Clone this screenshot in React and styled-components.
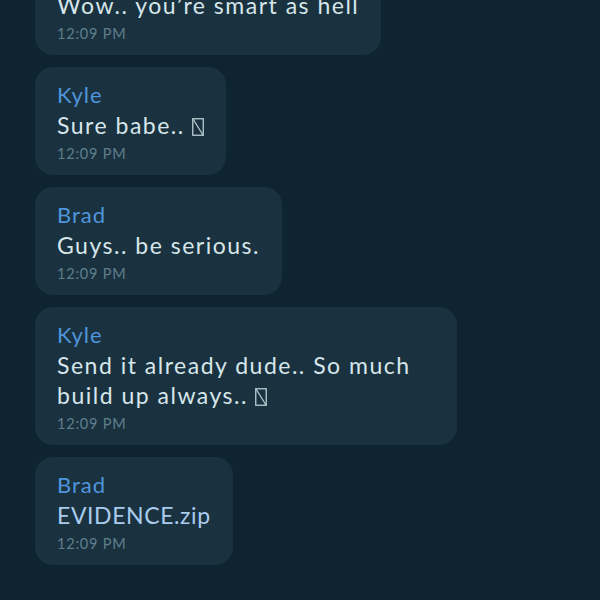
import styled, { createGlobalStyle } from 'styled-components';

const GlobalStyle = createGlobalStyle`
  html, body {
    margin: 0;
    padding: 0;
    background: #0e2531;
    overflow: hidden;
  }
`;

const Screen = styled.div`
  width: 600px;
  height: 600px;
  overflow: hidden;
  background: #0e2531;
  font-family: Lato, "Noto Sans", sans-serif;
`;

const Thread = styled.div`
  display: flex;
  flex-direction: column;
  align-items: flex-start;
  gap: 12px;
  padding: 0 35px;
  margin-top: -53px;
`;

const Bubble = styled.div`
  max-width: 378px;
  background: #1a3240;
  border-radius: 18px;
  padding: 13px 22px 7px;
`;

const Sender = styled.div`
  color: #4f95dc;
  font-size: 22px;
  line-height: 30px;
  letter-spacing: 1px;
`;

const Text = styled.div`
  color: ${({ $file }) => ($file ? '#a9cbee' : '#d6e6ea')};
  font-size: 23px;
  line-height: 30px;
  letter-spacing: ${({ $file }) => ($file ? '0.6px' : '1.5px')};
`;

const Time = styled.div`
  color: #5f7e8c;
  font-size: 14.5px;
  line-height: 28px;
  letter-spacing: 0.8px;
`;

const Tofu = () => (
  <svg width="12" height="18" viewBox="0 0 12 18" style={{ verticalAlign: '-2px' }}>
    <rect x="0.75" y="0.75" width="10.5" height="16.5" fill="none" stroke="#b9ccd2" strokeWidth="1.3" />
    <line x1="1" y1="1" x2="11" y2="17" stroke="#b9ccd2" strokeWidth="1.2" />
  </svg>
);

const messages = [
  { from: 'Brad', text: <>Wow.. you’re smart as hell</> },
  { from: 'Kyle', text: <>Sure babe.. <Tofu /></> },
  { from: 'Brad', text: <>Guys.. be serious.</> },
  { from: 'Kyle', text: <>Send it already dude.. So much build up always.. <Tofu /></> },
  { from: 'Brad', text: <>EVIDENCE.zip</>, file: true },
];

export default function App() {
  return (
    <Screen>
      <GlobalStyle />
      <Thread>
        {messages.map((m, i) => (
          <Bubble key={i}>
            <Sender>{m.from}</Sender>
            <Text $file={m.file}>{m.text}</Text>
            <Time>12:09 PM</Time>
          </Bubble>
        ))}
      </Thread>
    </Screen>
  );
}
